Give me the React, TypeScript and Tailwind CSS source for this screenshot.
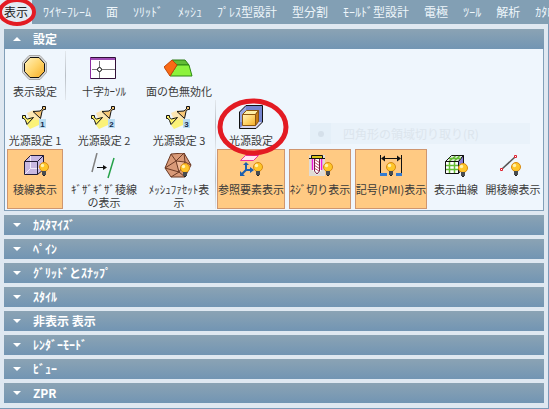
import React, { useState } from "react";

type Tool = {
  label: string;
  width: string;
  icon?: React.ReactNode;
  active?: boolean;
  divider?: boolean;
  circled?: boolean;
  wrap?: boolean;
};

function Bulb({ x, y }: { x: number; y: number }) {
  return (
    <g transform={`translate(${x} ${y})`}>
      <circle r="4.5" fill="#ffc62a" stroke="#d88a12" />
      <circle cx="-1.5" cy="-1.5" r="1.7" fill="#fff3ae" />
      <path d="M-2 4h4v4h-4z" fill="#484c50" />
      <path d="M-1 8h2v1h-2z" fill="#222" />
    </g>
  );
}

function Icon({ children }: { children: React.ReactNode }) {
  return (
    <svg viewBox="0 0 30 26" className="h-[26px] w-[30px] shrink-0" fill="none" aria-hidden="true">
      {children}
    </svg>
  );
}

function OctagonIcon() {
  return (
    <Icon>
      <defs>
        <linearGradient id="gold" x1="0" y1="0" x2="1" y2="1">
          <stop offset="0" stopColor="#fff2c0" />
          <stop offset="0.5" stopColor="#ffd56c" />
          <stop offset="1" stopColor="#f5ab24" />
        </linearGradient>
      </defs>
      <path d="M9 0.5h11l6.500 7v10l-6.500 7H9l-6.500-7v-10z" fill="#d8d8d8" stroke="#a9a9a9" />
      <path d="M10 2.500h9l5.500 6v8l-5.500 6h-9l-5.500-6v-8z" fill="url(#gold)" stroke="#111" />
    </Icon>
  );
}

function CrosshairIcon() {
  return (
    <Icon>
      <path d="M1.500 2.500h25v21h-25z" fill="#fff" stroke="#301038" />
      <path d="M2 3h24v2H2z" fill="#a04bb5" />
      <path d="M1.500 2v22" stroke="#8c2aa0" />
      <path d="M10.500 6v17M3 14.500h23" stroke="#777" />
      <circle cx="10.500" cy="14.500" r="2" fill="#fff" stroke="#111" />
    </Icon>
  );
}

function FaceIcon() {
  return (
    <Icon>
      <path d="M8 5h13l4 5H13z" fill="#62bd35" stroke="#2c7d14" />
      <path d="M13 10h12l3 11H6z" fill="#8cf23d" stroke="#2c8a14" />
      <path d="M0 12l8-7 5 5-7 11z" fill="#fa6a16" stroke="#c14808" />
    </Icon>
  );
}

function LightIcon({ n }: { n: number }) {
  return (
    <Icon>
      <path d="M7 21l7-8 8 3-3 5-9 4z" fill="#fff04a" opacity="0.75" />
      <path d="M14 6L7 9l3 7h11z" fill="#ffe2a0" opacity="0.8" />
      <path d="M2.500 11.500h3v2l2 1.500 6-1.500-6.500 7-1.500-4-1.500-2h-1.500z" fill="#fff36a" stroke="#111" />
      <path d="M22.500 2.500h3v3h-2l-1.500 2-1.500 7-7.500-7 7-.5 2.500-2z" fill="#f8c878" stroke="#111" />
      <path d="M19 15h7v9h-7z" fill="#b9dcf0" />
      <text x="22.500" y="23" textAnchor="middle" fontSize="8" fontWeight="700" fill="#16294a" fontFamily="Liberation Sans, sans-serif">
        {n}
      </text>
    </Icon>
  );
}

function LightSourceIcon() {
  return (
    <Icon>
      <path d="M10 1.500h16.500V18L20 24.500H3.500V8z" fill="#7585cf" />
      <path d="M3.500 24.500L10 18h16.500L20 24.500z" fill="#d6d4ee" />
      <path d="M10 2v16H4V8z" fill="#97a5df" />
      <path d="M10 1.500h16.500V18L20 24.500H3.500V8z" stroke="#111" />
      <path d="M6.500 10.500l4-4h12l-3 4z" fill="#fff0a5" stroke="#8c5610" />
      <path d="M19.500 10.500l3-4v11l-3 4z" fill="#c87c14" stroke="#8c5610" />
      <path d="M6.500 10.500h13v11h-13z" fill="url(#gold)" stroke="#8c5610" />
    </Icon>
  );
}

function EdgeCubeIcon() {
  return (
    <Icon>
      <path d="M4.500 8.500l6-6h13v14l-6 5h-13z" fill="#c9b9e2" />
      <path d="M10.500 2.500v13h13M10.500 15.500l-6 6" stroke="#f1ebfa" />
      <path d="M4.500 8.500h13v13h-13zM4.500 8.500l6-6h13l-6 6M23.500 2.500v14l-6 5" stroke="#211b35" />
      <Bulb x={24} y={14} />
    </Icon>
  );
}

function JaggedIcon() {
  return (
    <Icon>
      <path d="M8 0L3 19" stroke="#808080" strokeWidth="1.500" />
      <path d="M8 14.500h8" stroke="#111" />
      <path d="M14 12l4 2.500-4 2.500z" fill="#111" />
      <path d="M25 5l-6 20" stroke="#24a148" strokeWidth="1.500" />
    </Icon>
  );
}

function MeshIcon() {
  return (
    <Icon>
      <path d="M7 1l13-1 7 12-6 12H7L1 15z" fill="#d99a78" stroke="#6b3a25" />
      <path d="M12 8l9 1-6 10z" fill="#f1bb98" />
      <path d="M7 1l5 7 8-8 1 9 6 3M1 15l11-7 9 1-6 10-8 5M12 8l3 11 6 5M1 15l14 4" stroke="#6b3a25" />
      <Bulb x={21} y={15} />
    </Icon>
  );
}

function ReferenceIcon() {
  return (
    <Icon>
      <path d="M9.500 2.500h13l-5 5h-13z" fill="#ffe6f3" stroke="#ee2f9b" />
      <path d="M10 11v6h6M10 17l-4 4" stroke="#1d5fae" strokeWidth="2" />
      <path d="M7 12l3-3 3 3zM14 14l4 3-4 3zM4 18v5h5z" fill="#1d5fae" />
      <Bulb x={22} y={14} />
    </Icon>
  );
}

function ScrewIcon() {
  return (
    <Icon>
      <path d="M4 2h16v21H4z" fill="#e0dcd6" />
      <path d="M7.500 5v12l4.500 5 4.500-5V5z" fill="#fff" />
      <path d="M9 6l6 4M9 9l6 4M9 12l6 4M9 15l5 3" stroke="#c2486a" />
      <path d="M7.500 5v12M16.500 5v12" stroke="#ef16d8" strokeWidth="1.500" />
      <path d="M9.500 6v12l2.500 3 2.500-3V6" stroke="#731b44" />
      <path d="M6.500 2.500h11v3h-11z" fill="#d6c419" stroke="#111" />
      <path d="M4 5.500h16" stroke="#111" />
      <Bulb x={23} y={14} />
    </Icon>
  );
}

function PmiIcon() {
  return (
    <Icon>
      <path d="M4 20h22v3H4z" fill="#347bd0" />
      <path d="M11 20h9v3h-9z" fill="#ffca83" />
      <path d="M4.500 2v18M25.500 2v18M6 5.500h18" stroke="#111" />
      <path d="M5 5.500l4-3v6zM25 5.500l-4-3v6z" fill="#111" />
      <Bulb x={15} y={14} />
    </Icon>
  );
}

function CurveCubeIcon() {
  return (
    <Icon>
      <path d="M4.500 8.500l6-6h12l-5 6z" fill="#e4ece0" stroke="#111" />
      <path d="M17.500 8.500l5-6v12l-5 6z" fill="#8c7cd6" stroke="#111" />
      <path d="M4.500 8.500h13v12h-13z" fill="#fff" />
      <path d="M8.500 9v11M13.500 9v11M5 12.500h12M5 16.500h12M8.500 8l6-5M13.500 8l5-5M8 5.500h12" stroke="#65bd34" strokeWidth="1.500" />
      <path d="M4.500 8.500h13v12h-13z" stroke="#111" />
      <Bulb x={22} y={15} />
    </Icon>
  );
}

function OpenEdgeIcon() {
  return (
    <Icon>
      <path d="M4 16L17 4" stroke="#555" strokeWidth="1.500" />
      <path d="M2.500 15.500h2v2h-2zM16.500 2.500h2v2h-2z" fill="#fff" stroke="#e01f2c" />
      <Bulb x={18} y={14} />
    </Icon>
  );
}

const menus = ["表示", "ﾜｲﾔｰﾌﾚｰﾑ", "面", "ｿﾘｯﾄﾞ", "ﾒｯｼｭ", "ﾌﾟﾚｽ型設計", "型分割", "ﾓｰﾙﾄﾞ型設計", "電極", "ﾂｰﾙ", "解析", "ｶﾀﾛｸﾞ"];

const rows: Tool[][] = [
  [
    { label: "表示設定", width: "w-14", icon: <OctagonIcon />, divider: true },
    { label: "十字ｶｰｿﾙ", width: "w-[74px]", icon: <CrosshairIcon /> },
    { label: "面の色無効化", width: "w-[68px]", icon: <FaceIcon /> },
  ],
  [
    { label: "光源設定 1", width: "w-14", icon: <LightIcon n={1} /> },
    { label: "光源設定 2", width: "w-[74px]", icon: <LightIcon n={2} /> },
    { label: "光源設定 3", width: "w-[68px]", icon: <LightIcon n={3} />, divider: true },
    { label: "光源設定", width: "w-[68px]", icon: <LightSourceIcon />, circled: true },
  ],
  [
    { label: "稜線表示", width: "w-14", icon: <EdgeCubeIcon />, active: true },
    { label: "ｷﾞｻﾞｷﾞｻﾞ稜線の表示", width: "w-[74px]", icon: <JaggedIcon />, wrap: true },
    { label: "ﾒｯｼｭﾌｧｾｯﾄ表示", width: "w-[68px]", icon: <MeshIcon />, divider: true, wrap: true },
    { label: "参照要素表示", width: "w-[68px]", icon: <ReferenceIcon />, active: true },
    { label: "ﾈｼﾞ切り表示", width: "w-[62px]", icon: <ScrewIcon />, active: true },
    { label: "記号(PMI)表示", width: "w-[72px]", icon: <PmiIcon />, active: true },
    { label: "表示曲線", width: "w-[50px]", icon: <CurveCubeIcon /> },
    { label: "開稜線表示", width: "w-14", icon: <OpenEdgeIcon /> },
  ],
];

const sections = ["ｶｽﾀﾏｲｽﾞ", "ﾍﾟｲﾝ", "ｸﾞﾘｯﾄﾞとｽﾅｯﾌﾟ", "ｽﾀｲﾙ", "非表示 表示", "ﾚﾝﾀﾞｰﾓｰﾄﾞ", "ﾋﾞｭｰ", "ZPR"];

function SectionHeader({ title, open, onToggle }: { title: string; open: boolean; onToggle?: () => void }) {
  return (
    <h2>
      <button
        type="button"
        aria-expanded={open}
        onClick={onToggle}
        className="flex h-5 w-full items-center gap-3 bg-linear-to-b from-[#8ba3b4] to-[#7295b3] pl-[9px] text-left text-xs font-bold text-white"
      >
        <svg viewBox="0 0 8 4" className={open ? "h-1 w-2 rotate-180" : "h-1 w-2"} aria-hidden="true">
          <path d="M0 0h8L4 4z" fill="#fff" />
        </svg>
        <span>{title}</span>
      </button>
    </h2>
  );
}

function ToolButton({ tool }: { tool: Tool }) {
  return (
    <>
      <button
        type="button"
        aria-pressed={tool.active}
        className={`${tool.width} relative flex shrink-0 flex-col items-center gap-1 border pt-[3px] ${
          tool.active ? "border-[#cf966f] bg-[#ffca83]" : "border-transparent"
        }`}
      >
        {tool.icon}
        <span className={`text-center leading-[13px] ${tool.wrap ? "break-all" : "whitespace-nowrap"}`}>
          {tool.label}
        </span>
        {tool.circled && (
          <svg
            viewBox="0 0 74 58"
            className="pointer-events-none absolute -top-[3px] -left-0.5 z-10 h-[58px] w-[74px] max-w-none"
            fill="none"
            aria-hidden="true"
          >
            <ellipse cx="37" cy="29" rx="33" ry="26" stroke="#e31b23" strokeWidth="5" />
          </svg>
        )}
      </button>
      <span className="flex w-1 shrink-0 justify-center">
        {tool.divider && <span className="w-px bg-linear-to-b from-[#e3e8ed] via-[#b9bfc6] to-[#e3e8ed]" />}
      </span>
    </>
  );
}

export default function App() {
  const [open, setOpen] = useState(true);
  return (
    <div className="relative overflow-hidden bg-[#dfe8f1] font-['Noto_Sans_CJK_JP',sans-serif] text-[#3a3a3a]">
      <nav className="flex h-6 gap-[15px] bg-[#829fb4] text-xs whitespace-nowrap text-[#eef6fb]">
        {menus.map((menu, i) => (
          <button
            key={menu}
            type="button"
            className={i === 0 ? "-mr-1 w-8 shrink-0 bg-[#e3ebf3] text-[#222]" : "shrink-0"}
          >
            {menu}
          </button>
        ))}
      </nav>
      <svg viewBox="0 0 38 26" className="pointer-events-none absolute top-0 left-0 h-[26px] w-[38px]" fill="none" aria-hidden="true">
        <ellipse cx="17" cy="12" rx="17" ry="12" stroke="#e31b23" strokeWidth="4" />
      </svg>
      <main className="flex flex-col gap-1 border-r border-b border-[#7b9ab8] pt-[5px] pr-1 pb-[5px] pl-1">
        <section>
          <SectionHeader title="設定" open={open} onToggle={() => setOpen(!open)} />
          {open && (
            <div className="relative border-x border-b border-[#829fb8] bg-[#eff6fd] px-0.5 pt-0.5 pb-px text-[11px]">
              <div className="absolute top-[74px] left-[305px] flex h-[21px] w-[220px] items-center bg-[#e9f2fa] text-[#dce5ed]">
                <span className="flex h-full w-[21px] items-center justify-center bg-[#e4eff8]">
                  <span className="size-1.5 rounded-full bg-[#d5e0ea]" />
                </span>
                <span className="pl-3 text-xs">四角形の領域切り取り(R)</span>
              </div>
              {rows.map((row, r) => (
                <div key={r} className={r === 2 ? "flex h-[60px]" : "flex h-[49px]"}>
                  {row.map((tool) => (
                    <ToolButton key={tool.label} tool={tool} />
                  ))}
                </div>
              ))}
            </div>
          )}
        </section>
        {sections.map((title) => (
          <section key={title}>
            <SectionHeader title={title} open={false} />
          </section>
        ))}
      </main>
    </div>
  );
}
